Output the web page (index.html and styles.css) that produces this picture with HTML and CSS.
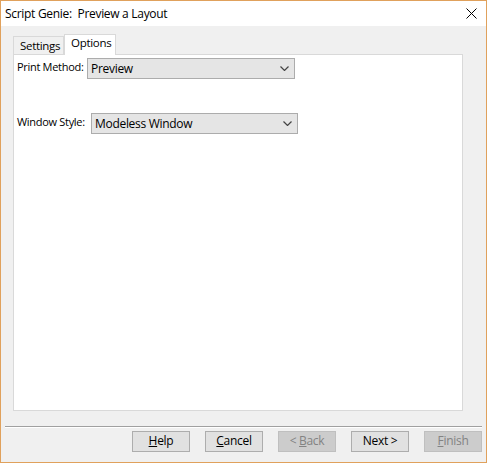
FILE: index.html
```html
<!DOCTYPE html>
<html>
<head>
<meta charset="utf-8">
<link rel="stylesheet" href="styles.css">
</head>
<body>
<div class="window">
  <div class="titlebar">
    <span class="title">Script Genie:&nbsp; Preview a Layout</span>
    <svg class="close" width="11" height="11" viewBox="0 0 11 11"><path d="M0.5 0.5 L10.5 10.5 M10.5 0.5 L0.5 10.5" stroke="#000" stroke-width="1" fill="none"/></svg>
  </div>
  <div class="content">
    <div class="tabs">
      <div class="tab">Settings</div>
      <div class="tab active">Options</div>
    </div>
    <div class="panel">
      <div class="row row-print">
        <label class="lbl lbl-print">Print Method:</label>
        <div class="select select-print"><span>Preview</span>
          <svg class="chev" width="9" height="5" viewBox="0 0 9 5"><path d="M0.5 0.5 L4.5 4.5 L8.5 0.5" stroke="#444" stroke-width="1.2" fill="none"/></svg>
        </div>
      </div>
      <div class="row row-window">
        <label class="lbl lbl-window">Window Style:</label>
        <div class="select select-window"><span>Modeless Window</span>
          <svg class="chev" width="9" height="5" viewBox="0 0 9 5"><path d="M0.5 0.5 L4.5 4.5 L8.5 0.5" stroke="#444" stroke-width="1.2" fill="none"/></svg>
        </div>
      </div>
    </div>
    <div class="separator"></div>
    <div class="buttons">
      <div class="btn"><u>H</u>elp</div>
      <div class="btn"><u>C</u>ancel</div>
      <div class="btn disabled">&lt; <u>B</u>ack</div>
      <div class="btn">Next &gt;</div>
      <div class="btn disabled"><u>F</u>inish</div>
    </div>
  </div>
</div>
</body>
</html>
```
FILE: styles.css
```css
html, body {
  margin: 0;
  padding: 0;
}
body {
  font-family: "Open Sans", "Noto Sans", sans-serif;
  font-size: 12px;
  letter-spacing: -0.3px;
  color: #000;
  background: #f0f0f0;
}
.window {
  width: 487px;
  height: 463px;
  box-sizing: border-box;
  border: 1px solid #e0a15c;
  background: #f0f0f0;
  display: flex;
  flex-direction: column;
}
.titlebar {
  height: 25px;
  background: #fff;
  display: flex;
  align-items: center;
  justify-content: space-between;
  padding: 0 9px 0 4px;
  flex: none;
}
.title {
  white-space: nowrap;
}
.close {
  display: block;
}
.content {
  flex: 1;
  display: flex;
  flex-direction: column;
  padding: 8px 0 0 0;
}
.tabs {
  display: flex;
  align-items: flex-end;
  height: 20px;
  padding-left: 12px;
  position: relative;
  z-index: 1;
  font-size: 11.5px;
}
.tab {
  height: 18px;
  box-sizing: border-box;
  border: 1px solid #d9d9d9;
  border-bottom: none;
  background: #f0f0f0;
  padding: 0 0 0 6px;
  line-height: 17px;
  width: 51px;
  white-space: nowrap;
  overflow: hidden;
}
.tab.active {
  height: 21px;
  margin-bottom: -1px;
  background: #fff;
  width: 52px;
  padding-left: 6px;
  line-height: 16px;
}
.panel {
  margin-left: 12px;
  width: 450px;
  height: 357px;
  box-sizing: border-box;
  border: 1px solid #d9d9d9;
  background: #fff;
  padding: 3px 0 0 3px;
  flex: none;
}
.row {
  display: flex;
  align-items: flex-start;
}
.row-window {
  margin-top: 34px;
}
.lbl {
  white-space: nowrap;
  flex: none;
  font-size: 11px;
  line-height: 15px;
  margin-top: 1px;
}
.lbl-print { width: 70px; }
.lbl-window { width: 74px; }
.select {
  height: 21px;
  box-sizing: border-box;
  border: 1px solid #acacac;
  background: #e5e5e5;
  display: flex;
  align-items: center;
  justify-content: space-between;
  padding: 0 5px 0 3px;
  flex: none;
}
.select-print { width: 208px; }
.select-window { width: 207px; }
.chev { display: block; }
.separator {
  margin: 15px 4px 0 4px;
  height: 1px;
  background: #a0a0a0;
  border-bottom: 1px solid #fff;
}
.buttons {
  display: flex;
  justify-content: flex-end;
  gap: 15px;
  padding: 3px 4px 0 0;
}
.btn {
  width: 58px;
  height: 21px;
  box-sizing: border-box;
  border: 1px solid #adadad;
  background: #e1e1e1;
  text-align: center;
  line-height: 18px;
}
.btn.disabled {
  background: #cccccc;
  border-color: #bfbfbf;
  color: #838383;
}
```
